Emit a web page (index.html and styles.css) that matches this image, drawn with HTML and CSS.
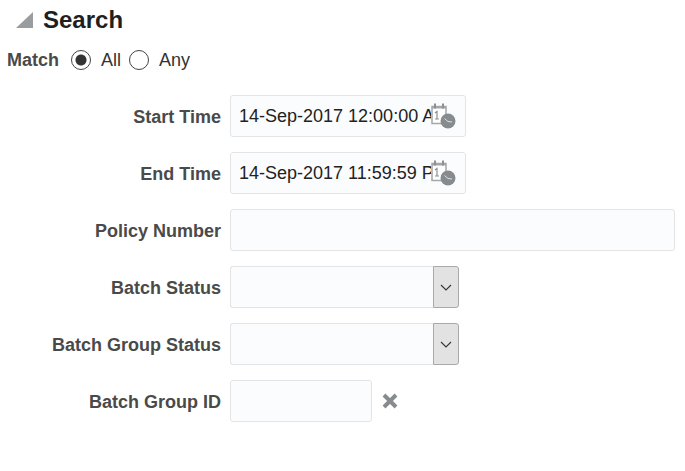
FILE: index.html
```html
<!DOCTYPE html>
<html lang="en">
  <head>
    <meta charset="UTF-8" />
    <title>Search</title>
    <link rel="stylesheet" href="styles.css">
  </head>
  <body>
    <header class="search-header">
      <svg class="disclosure" width="18" height="16" viewBox="0 0 18 16"><polygon points="17,0 17,16 0,16" fill="#9a9d9f"/></svg>
      <h1>Search</h1>
    </header>

    <div class="match-row">
      <span class="match-label">Match</span>
      <span class="radio radio__checked"></span>
      <span class="radio-text">All</span>
      <span class="radio"></span>
      <span class="radio-text">Any</span>
    </div>

    <form class="search-form">
      <label class="field-label">Start Time</label>
      <div class="field">
        <div class="input input-date">
          <input class="input-text" type="text" value="14-Sep-2017 12:00:00 AM" />
          <svg class="date-icon" width="25" height="26" viewBox="0 0 25 26">
            <rect x="1" y="3.5" width="14" height="17" fill="#fff" stroke="#a3a7aa" stroke-width="1.5"/>
            <rect x="1" y="3" width="14" height="2.5" fill="#a3a7aa"/>
            <rect x="3" y="0.5" width="2" height="5" fill="#8c9194"/>
            <rect x="11" y="0.5" width="2" height="5" fill="#8c9194"/>
            <path d="M4 10 L6 8.5 L6 16 M4 16 L8 16" fill="none" stroke="#8c9194" stroke-width="1.2"/>
            <circle cx="17" cy="18" r="7.5" fill="#858b8f"/>
            <path d="M13.5 15.5 L17 18.5 L21 19" fill="none" stroke="#dfe1e2" stroke-width="1"/>
          </svg>
        </div>
      </div>

      <label class="field-label">End Time</label>
      <div class="field">
        <div class="input input-date">
          <input class="input-text" type="text" value="14-Sep-2017 11:59:59 PM" />
          <svg class="date-icon" width="25" height="26" viewBox="0 0 25 26">
            <rect x="1" y="3.5" width="14" height="17" fill="#fff" stroke="#a3a7aa" stroke-width="1.5"/>
            <rect x="1" y="3" width="14" height="2.5" fill="#a3a7aa"/>
            <rect x="3" y="0.5" width="2" height="5" fill="#8c9194"/>
            <rect x="11" y="0.5" width="2" height="5" fill="#8c9194"/>
            <path d="M4 10 L6 8.5 L6 16 M4 16 L8 16" fill="none" stroke="#8c9194" stroke-width="1.2"/>
            <circle cx="17" cy="18" r="7.5" fill="#858b8f"/>
            <path d="M13.5 15.5 L17 18.5 L21 19" fill="none" stroke="#dfe1e2" stroke-width="1"/>
          </svg>
        </div>
      </div>

      <label class="field-label">Policy Number</label>
      <div class="field">
        <div class="input input-wide"></div>
      </div>

      <label class="field-label">Batch Status</label>
      <div class="field">
        <div class="select">
          <div class="select-value"></div>
          <div class="select-button">
            <svg width="12" height="7" viewBox="0 0 12 7"><path d="M1 1 L6 6 L11 1" fill="none" stroke="#333" stroke-width="1.1"/></svg>
          </div>
        </div>
      </div>

      <label class="field-label">Batch Group Status</label>
      <div class="field">
        <div class="select">
          <div class="select-value"></div>
          <div class="select-button">
            <svg width="12" height="7" viewBox="0 0 12 7"><path d="M1 1 L6 6 L11 1" fill="none" stroke="#333" stroke-width="1.1"/></svg>
          </div>
        </div>
      </div>

      <label class="field-label">Batch Group ID</label>
      <div class="field">
        <div class="input input-short"></div>
        <svg class="clear-icon" width="16" height="16" viewBox="0 0 16 16"><path d="M2 2 L14 14 M14 2 L2 14" stroke="#858b8f" stroke-width="4"/></svg>
      </div>
    </form>
  </body>
</html>
```

FILE: styles.css
```css
* {
  box-sizing: border-box;
  padding: 0;
  margin: 0;
}

body {
  font-family: "Liberation Sans", Arial, sans-serif;
  font-size: 18px;
  color: #333;
  background-color: #fff;
}

.search-header {
  display: flex;
  align-items: center;
  height: 26px;
  margin-top: 7px;
  padding-left: 16px;
}

.search-header h1 {
  margin-left: 9px;
  font-size: 24px;
  font-weight: bold;
  color: #1f1f1f;
}

.match-row {
  display: flex;
  align-items: center;
  height: 24px;
  margin-top: 15px;
  padding-left: 7px;
}

.match-label {
  margin-right: 12px;
  font-weight: bold;
  color: #4a4a4a;
}

.radio {
  width: 20px;
  height: 20px;
  border: 1px solid #444;
  border-radius: 50%;
  background: #fff;
}

.radio__checked {
  background: radial-gradient(circle, #333 0, #333 5px, #fff 6px);
}

.radio-text {
  margin-left: 10px;
  margin-right: 8px;
}

.search-form {
  display: grid;
  grid-template-columns: 221px 1fr;
  grid-auto-rows: 42px;
  row-gap: 15px;
  align-items: center;
  margin-top: 23px;
}

.field-label {
  padding-top: 2px;
  font-weight: bold;
  color: #4a4a4a;
  text-align: right;
}

.field {
  display: flex;
  align-items: center;
  margin-left: 9px;
  height: 42px;
}

.input {
  height: 42px;
  background: #fbfcfe;
  border: 1px solid #e3e4e5;
  border-radius: 3px;
}

.input-date {
  display: flex;
  align-items: center;
  width: 236px;
  padding-left: 8px;
}

.input-text {
  width: 192px;
  font: inherit;
  color: #222;
  background: transparent;
  border: none;
  outline: none;
}

.date-icon {
  flex: none;
  margin-bottom: 1px;
}

.input-wide {
  width: 445px;
}

.input-short {
  width: 142px;
}

.select {
  display: flex;
  width: 229px;
  height: 42px;
}

.select-value {
  flex: 1;
  background: #fbfcfe;
  border: 1px solid #e3e4e5;
  border-right: none;
  border-radius: 3px 0 0 3px;
}

.select-button {
  display: flex;
  align-items: center;
  justify-content: center;
  width: 26px;
  background: #e2e2e2;
  border: 1px solid #a9a9a9;
  border-radius: 0 3px 3px 0;
}

.clear-icon {
  margin-left: 10px;
}
```
